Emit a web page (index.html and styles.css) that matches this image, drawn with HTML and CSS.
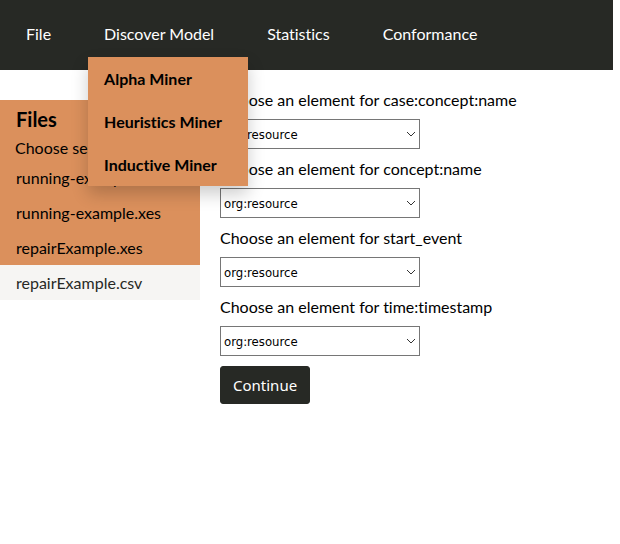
FILE: index.html
```html
<!DOCTYPE html>
<html lang="en">
<head>
<meta charset="utf-8">
<title>Process Mining</title>
<link rel="stylesheet" href="styles.css">
</head>
<body>
<nav class="navbar">
  <ul class="nav-list">
    <li class="nav-item"><a class="nav-link" href="#">File</a></li>
    <li class="nav-item">
      <a class="nav-link" href="#">Discover Model</a>
      <ul class="dropdown">
        <li><a class="dropdown-link" href="#">Alpha Miner</a></li>
        <li><a class="dropdown-link" href="#">Heuristics Miner</a></li>
        <li><a class="dropdown-link" href="#">Inductive Miner</a></li>
      </ul>
    </li>
    <li class="nav-item"><a class="nav-link" href="#">Statistics</a></li>
    <li class="nav-item"><a class="nav-link" href="#">Conformance</a></li>
  </ul>
</nav>
<div class="page">
  <aside class="sidebar">
    <h2 class="sidebar-title">Files</h2>
    <p class="sidebar-note">Choose separator</p>
    <a class="file-link" href="#">running-example.csv</a>
    <a class="file-link" href="#">running-example.xes</a>
    <a class="file-link" href="#">repairExample.xes</a>
    <a class="file-link file-link-active" href="#">repairExample.csv</a>
  </aside>
  <main class="content">
    <form class="mapping">
      <div class="field">
        <label for="case-name">Choose an element for case:concept:name</label>
        <div class="select-box">
          <select id="case-name"><option>org:resource</option></select>
          <svg class="chevron" viewBox="0 0 10 6"><path d="M1 1l4 4 4-4"/></svg>
        </div>
      </div>
      <div class="field">
        <label for="concept-name">Choose an element for concept:name</label>
        <div class="select-box">
          <select id="concept-name"><option>org:resource</option></select>
          <svg class="chevron" viewBox="0 0 10 6"><path d="M1 1l4 4 4-4"/></svg>
        </div>
      </div>
      <div class="field">
        <label for="start-event">Choose an element for start_event</label>
        <div class="select-box">
          <select id="start-event"><option>org:resource</option></select>
          <svg class="chevron" viewBox="0 0 10 6"><path d="M1 1l4 4 4-4"/></svg>
        </div>
      </div>
      <div class="field">
        <label for="timestamp">Choose an element for time:timestamp</label>
        <div class="select-box">
          <select id="timestamp"><option>org:resource</option></select>
          <svg class="chevron" viewBox="0 0 10 6"><path d="M1 1l4 4 4-4"/></svg>
        </div>
      </div>
      <button class="continue" type="button">Continue</button>
    </form>
  </main>
</div>
</body>
</html>
```
FILE: styles.css
```css
* {
  box-sizing: border-box;
}

body {
  margin: 0;
  padding-right: 7px;
  background: #fff;
  color: #000;
  font: 16px/24px Lato, sans-serif;
  font-variant-ligatures: none;
}

a {
  color: inherit;
  text-decoration: none;
}

ul {
  margin: 0;
  padding: 0;
  list-style: none;
}

.navbar {
  height: 70px;
  padding: 12px 10px;
  background: #272925;
}

.nav-list {
  display: flex;
  gap: 21px;
}

.nav-item {
  position: relative;
}

.nav-link {
  display: block;
  padding: 10px 16px 11px;
  color: #fff;
}

.dropdown {
  position: absolute;
  top: 100%;
  left: 0;
  z-index: 1;
  min-width: 160px;
  background: #db905c;
  box-shadow: 0 8px 16px rgba(0, 0, 0, 0.2);
}

.dropdown-link {
  display: block;
  padding: 10px 16px 9px;
  color: #000;
  font-weight: 700;
  white-space: nowrap;
}

.page {
  display: flex;
  align-items: flex-start;
  gap: 20px;
}

.sidebar {
  flex: 0 0 200px;
  margin-top: 30px;
  background: #db905c;
}

.sidebar-title {
  margin: 0;
  padding: 7px 16px 5px;
  font-size: 20px;
  line-height: 24px;
}

.sidebar-note {
  margin: 0;
  padding: 0 15px;
}

.file-link {
  display: block;
  padding: 6px 16px 5px;
}

.file-link-active {
  background: #f6f5f3;
  color: #272925;
}

.content {
  flex: 1;
  padding-top: 18px;
}

.mapping {
  display: flex;
  flex-direction: column;
  align-items: flex-start;
  gap: 8px;
}

.field {
  display: flex;
  flex-direction: column;
  gap: 7px;
}

.select-box {
  display: grid;
  align-items: center;
  width: 200px;
}

.select-box > * {
  grid-area: 1 / 1;
}

select {
  width: 100%;
  height: 30px;
  padding: 0 3px;
  border: 1px solid #767676;
  border-radius: 0;
  background: #fff;
  color: #000;
  font: 13px "DejaVu Sans Condensed", "DejaVu Sans", sans-serif;
  appearance: none;
}

.chevron {
  justify-self: end;
  width: 10px;
  height: 6px;
  margin-right: 4px;
  fill: none;
  stroke: #333;
  pointer-events: none;
}

.continue {
  margin-top: 2px;
  padding: 6px 12px;
  border: 1px solid #272925;
  border-radius: 3px;
  background: #272925;
  color: #fff;
  font: 15px/24px "Noto Sans", sans-serif;
}
```
